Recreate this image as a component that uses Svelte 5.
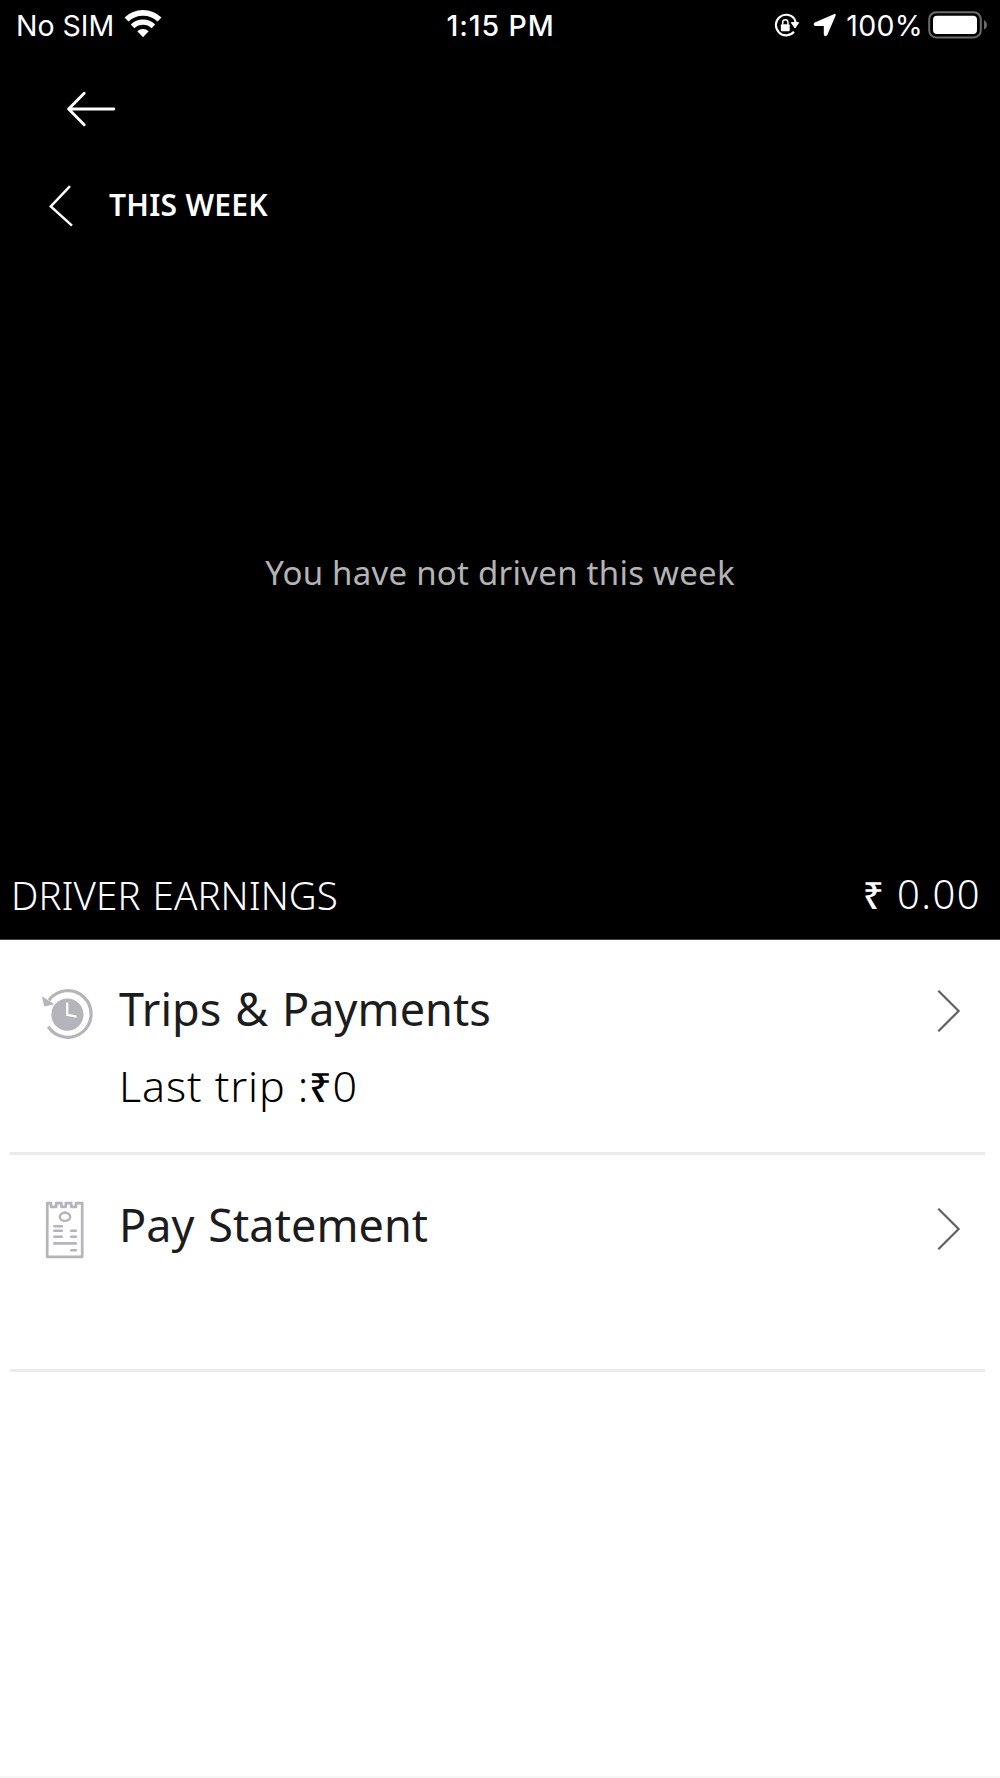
<script lang="ts">
  const rows = [
    { id: 'trips', title: 'Trips & Payments', detail: 'Last trip :', amount: '0' },
    { id: 'statement', title: 'Pay Statement', detail: '', amount: '' },
  ];
</script>

<div class="screen">
  <header class="summary">
    <div class="status-bar">
      <div class="status-left">
        <span class="carrier">No SIM</span>
        <svg width="38" height="28" viewBox="0 0 38 28" fill="none">
          <path d="M2.5 9.6a23.6 23.6 0 0 1 33 0" stroke="#fff" stroke-width="5.6"/>
          <path d="M8.6 16.4a15 15 0 0 1 20.8 0" stroke="#fff" stroke-width="5.2"/>
          <path d="M13.3 21.2a8.4 8.4 0 0 1 11.4 0L19 27.2Z" fill="#fff"/>
        </svg>
      </div>
      <span class="time">1:15 PM</span>
      <div class="status-right">
        <svg class="lock" width="27" height="25" viewBox="0 0 27 25" fill="none">
          <path d="M21.3 5.7A10.3 10.3 0 1 0 21 18.8M21.3 5.7A10.3 10.3 0 0 1 22.6 10" stroke="#fff" stroke-width="2.1"/>
          <path d="M18.3 9.6h7.4L22 15Z" fill="#fff" stroke="#fff" stroke-linejoin="round"/>
          <rect x="7.9" y="11.3" width="8.8" height="7" rx="1" fill="#fff"/>
          <path d="M9.7 11.5V9.3a2.6 2.6 0 0 1 5.2 0v2.2" stroke="#fff" stroke-width="1.5"/>
        </svg>
        <svg class="location" width="24" height="24" viewBox="0 0 24 24">
          <path d="M21.8 1.8 2.2 10.3c-.9.5-.6 1.5.3 1.6h9.3v9.4c0 1 1.1 1.2 1.6.3Z" fill="#fff" stroke="#fff" stroke-width="2" stroke-linejoin="round"/>
        </svg>
        <span class="percent">100%</span>
        <svg class="battery" width="60" height="28" viewBox="0 0 60 28" fill="none">
          <rect x="1.2" y="1.2" width="51.6" height="25.2" rx="7" stroke="#6b6b6b" stroke-width="2"/>
          <rect x="5" y="4.8" width="44" height="18.2" rx="4" fill="#fff"/>
          <path d="M56 9.2c4 1.8 4 7.6 0 9.4Z" fill="#6b6b6b"/>
        </svg>
      </div>
    </div>

    <button class="back" aria-label="Back">
      <svg width="50" height="36" viewBox="0 0 50 36" fill="none">
        <path d="M18.2 2.2 2.6 18l15.6 15.8M2.6 18h45.2" stroke="#fff" stroke-width="2.9" stroke-linecap="round" stroke-linejoin="round"/>
      </svg>
    </button>

    <div class="week">
      <button aria-label="Previous week">
        <svg width="24" height="42" viewBox="0 0 24 42" fill="none">
          <path d="M21 1.2 1.8 21.4 23 40.6" stroke="#fff" stroke-width="2.5"/>
        </svg>
      </button>
      <h1>THIS WEEK</h1>
    </div>

    <p class="empty">You have not driven this week</p>

    <div class="earnings">
      <span class="earnings-label">DRIVER EARNINGS</span>
      <span class="earnings-total"><span class="rupee">₹</span> 0.00</span>
    </div>
  </header>

  <main>
    {#each rows as row (row.id)}
      <section class="row {row.id}">
        <div class="row-icon">
          {#if row.id === 'trips'}
            <svg width="52" height="52" viewBox="0 0 52 52" fill="none">
              <path d="M8 12.2A23.3 23.3 0 1 1 7.2 38.6" stroke="#b4b4bb" stroke-width="3.2"/>
              <path d="M.9 8.2 3.2 18.6 13.3 16.2Z" fill="#b4b4bb"/>
              <circle cx="26.4" cy="26.6" r="16.1" fill="#b4b4bb"/>
              <path d="M26.2 14.6v12.2l9.4 1.8" stroke="#fff" stroke-width="2.2"/>
            </svg>
          {:else}
            <svg width="40" height="58" viewBox="0 0 40 58" fill="none">
              <path d="M2.3 2.2H6v3.6h5.2V2.2h5.2v3.6h4.4V2.2h5.4v3.6h4.8V2.2h6.2v53.6h-35Z" stroke="#b4b4bb" stroke-width="2.7" stroke-linejoin="round"/>
              <ellipse cx="20" cy="15.8" rx="5.2" ry="4.1" stroke="#b4b4bb" stroke-width="2.4"/>
              <path d="M20 10.5v2" stroke="#b4b4bb" stroke-width="2"/>
              <path d="M9.3 25.2h7.5M9.3 29.7h7.5M26.3 29.7h4.5M9.3 35.8h7.5M26.3 35.8h4.5M9.3 42.4h21.5M26.3 49.2h4.5" stroke="#b4b4bb" stroke-width="2.6" stroke-linecap="round"/>
            </svg>
          {/if}
        </div>
        <div class="row-text">
          <h2>{row.title}</h2>
          {#if row.detail}
            <p>{row.detail}<span class="rupee">₹</span>{row.amount}</p>
          {/if}
        </div>
        <svg class="chevron" width="24" height="44" viewBox="0 0 24 44" fill="none">
          <path d="M1.3 1.8 21.6 22 1.3 42.2" stroke="#606060" stroke-width="2.2"/>
        </svg>
      </section>
    {/each}
  </main>
</div>

<style>
  :global(body) {
    background: #fff;
  }

  .screen {
    display: flex;
    flex-direction: column;
    box-sizing: border-box;
    width: 1000px;
    height: 1778px;
    overflow: hidden;
    background: #fff;
    border-bottom: 2px solid #f7f7f7;
    font-family: "Noto Sans", "Open Sans", sans-serif;
  }

  h1,
  h2,
  p {
    margin: 0;
  }

  svg {
    display: block;
  }

  button {
    display: block;
    padding: 0;
    border: none;
    background: none;
  }

  .summary {
    display: flex;
    flex-direction: column;
    box-sizing: border-box;
    height: 940px;
    background: #000;
    border-bottom: 1px solid #444;
    color: #fff;
  }

  .status-bar {
    display: grid;
    grid-template-columns: 1fr auto 1fr;
    align-items: center;
    height: 50px;
    padding: 0 12px 0 16px;
    font-family: Inter, "Liberation Sans", sans-serif;
    font-size: 28.5px;
    white-space: nowrap;
  }

  .status-left,
  .status-right {
    display: flex;
    align-items: center;
  }

  .status-left {
    gap: 10px;
  }

  .status-left svg {
    margin-bottom: 3px;
  }

  .status-right {
    justify-content: flex-end;
  }

  .time {
    margin-right: 3px;
    font-weight: 500;
    letter-spacing: 0.9px;
  }

  .lock {
    margin-right: 13px;
  }

  .location {
    margin-right: 9px;
  }

  .percent {
    margin-right: 5px;
    letter-spacing: 0.3px;
  }

  .back {
    margin: 41px 0 0 66px;
    align-self: flex-start;
  }

  .week {
    display: flex;
    align-items: center;
    gap: 36px;
    margin-top: 58px;
    padding-left: 49px;
  }

  .week h1 {
    margin-bottom: 2px;
    font-size: 30px;
    font-weight: 600;
    line-height: 40px;
    letter-spacing: 0.25px;
  }

  .empty {
    margin-top: 321px;
    font-size: 33px;
    line-height: 50px;
    letter-spacing: 0.25px;
    text-align: center;
    color: #b4b4b4;
  }

  .earnings {
    display: flex;
    justify-content: space-between;
    align-items: center;
    margin-top: auto;
    padding: 0 19px 19px 11px;
    font-size: 38.5px;
    font-weight: 300;
    line-height: 50px;
    letter-spacing: 0.05px;
    word-spacing: 2px;
  }

  .earnings-total {
    font-size: 40px;
    letter-spacing: 1.4px;
    word-spacing: 0;
  }

  .rupee {
    font-size: 0.92em;
    font-weight: 500;
  }

  .row {
    display: flex;
    align-items: flex-start;
    box-sizing: border-box;
    height: 215px;
    margin: 0 15px 0 10px;
    padding: 49px 24px 0 31px;
    border-bottom: 3px solid #ebebeb;
  }

  .row.statement {
    height: 217px;
    padding-top: 52px;
  }

  .row-icon {
    width: 78px;
    flex-shrink: 0;
  }

  .trips .row-icon svg {
    margin-top: -1px;
  }

  .statement .row-icon svg {
    margin: -6px 0 0 4px;
  }

  .row-text {
    flex: 1;
  }

  .row h2 {
    margin-top: -8px;
    font-size: 45px;
    font-weight: 400;
    line-height: 56px;
    letter-spacing: 0.05px;
    word-spacing: 2px;
    color: #1c1c1e;
  }

  .statement h2 {
    margin-top: -10px;
  }

  .row p {
    margin-top: 22px;
    font-size: 43px;
    font-weight: 300;
    line-height: 54px;
    letter-spacing: 0.9px;
    color: #000;
  }
</style>
